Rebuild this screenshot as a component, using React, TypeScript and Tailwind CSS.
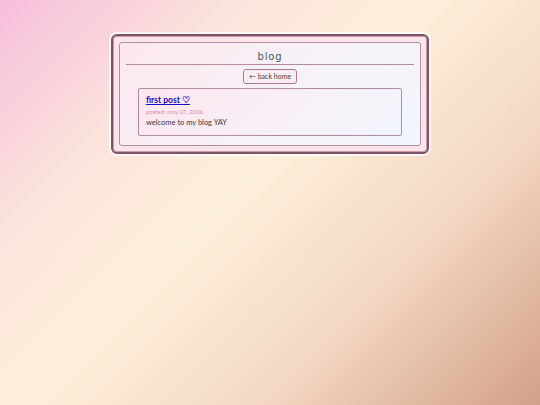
export default function App() {
  return (
    <div
      className="min-h-screen w-full pt-[32px] bg-[linear-gradient(135deg,#f6bedb_0%,#fbe3dc_25%,#fdf0da_45%,#f3d8c4_70%,#d3a088_100%)] leading-none"
      style={{ fontFamily: 'Lato, "Noto Sans", sans-serif' }}
    >
      <div className="mx-auto w-[322px] rounded-[8px] bg-white/70 p-[2px]">
        <div className="rounded-[6px] border-2 border-[#7f5468] bg-[#fbe4ea] p-[6px] shadow-[inset_0_0_0_1px_#c79aae]">
          <div className="rounded-[3px] border border-[#b48ea2] bg-[linear-gradient(135deg,#fde7ef_0%,#f6f2f8_55%,#f1f6fc_100%)] px-[6px] pt-[8px] pb-[9px]">
            <h1
              className="text-center text-[10px] leading-[12px] tracking-[0.8px] text-[#3f5c5c]"
              style={{ fontFamily: '"DejaVu Sans", sans-serif' }}
            >
              blog
            </h1>
            <div className="mt-[1px] h-px bg-[#b48a9e]" />
            <div className="mt-[4px] flex justify-center">
              <button className="h-[15px] rounded-[3px] border border-[#a57c92] bg-[#fbeef3] px-[5px] text-[7px] leading-[13px] text-[#444]">
                ← back home
              </button>
            </div>
            <div className="mx-[12px] mt-[4px] rounded-[2px] border border-[#b08ca0] bg-[linear-gradient(135deg,#fde6ef_0%,#f7f0f7_60%,#f1f5fb_100%)] px-[7px] pt-[6px] pb-[7px]">
              <a href="#" className="block text-[8.5px] font-bold leading-[11px] text-[#1a0dcc] underline">
                first post ♡
              </a>
              <div className="mt-[2px] text-[6px] leading-[8px] text-[#d98aaa]">posted: may 07, 2026</div>
              <div className="mt-[2px] text-[7.5px] leading-[10px] text-[#3a3a3a]">welcome to my blog YAY</div>
            </div>
          </div>
        </div>
      </div>
    </div>
  )
}
